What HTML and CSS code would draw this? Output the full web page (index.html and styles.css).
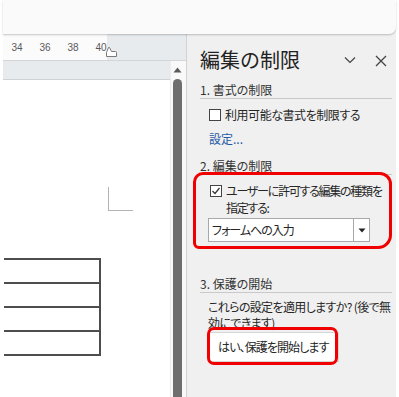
FILE: index.html
```html
<!DOCTYPE html>
<html lang="ja">
<head>
<meta charset="utf-8">
<link rel="stylesheet" href="styles.css">
</head>
<body>
<div class="frame">
  <div class="ribbon"></div>
  <div class="work">
    <div class="doc">
      <div class="ruler">
        <div class="ruler-white">
          <span class="tick">34</span><span class="tick">36</span><span class="tick">38</span><span class="tick">40</span>
        </div>
        <svg class="indent" width="13" height="11" viewBox="0 0 13 11"><path d="M2.5 10.5 V6.5 L4.5 1.5 Q5 0.8 5.5 1.5 L7.5 5.5 H11.5 Q12.5 5.5 12.5 6.5 V10.5 Z" fill="#fff" stroke="#7a7a7a" stroke-width="1"/></svg>
      </div>
      <div class="docbody">
        <div class="pagecol">
          <div class="band"></div>
          <div class="page">
            <div class="corner"></div>
            <div class="tbl">
              <div class="tr"></div>
              <div class="tr"></div>
              <div class="tr"></div>
              <div class="tr"></div>
            </div>
          </div>
        </div>
        <div class="scroll">
          <svg class="up" width="9" height="6" viewBox="0 0 9 6"><path d="M0.5 5.5 L4.5 0.5 L8.5 5.5 Z" fill="#5a5a5a"/></svg>
          <div class="thumb"></div>
        </div>
      </div>
    </div>
    <div class="pane">
      <div class="pane-head">
        <div class="pane-title">編集の制限</div>
        <svg class="ic chev" width="12" height="12" viewBox="0 0 12 12"><polyline points="1,3.5 6,8.5 11,3.5" fill="none" stroke="#444" stroke-width="1.2"/></svg>
        <svg class="ic close" width="12" height="12" viewBox="0 0 12 12"><path d="M1 1 L11 11 M11 1 L1 11" stroke="#444" stroke-width="1.3"/></svg>
      </div>

      <div class="sec-h">1. 書式の制限</div>
      <div class="chk-row one">
        <span class="box"></span>
        <span class="lbl">利用可能な書式を制限する</span>
      </div>
      <div class="link">設定...</div>

      <div class="sec-h sec2">2. 編集の制限</div>
      <div class="chk-row two">
        <span class="box checked"><svg width="10" height="10" viewBox="0 0 10 10"><polyline points="1.5,5 4,7.5 8.5,2" fill="none" stroke="#333" stroke-width="1.2"/></svg></span>
        <span class="lbl">ユーザーに許可する編集の種類を<br>指定する:</span>
      </div>
      <div class="select">
        <span class="sel-text">フォームへの入力</span>
        <span class="sel-btn"><svg width="8" height="5" viewBox="0 0 8 5"><path d="M0.5 0.5 H7.5 L4 4.5 Z" fill="#222"/></svg></span>
      </div>

      <div class="sec-h sec3">3. 保護の開始</div>
      <p class="para"><span class="pl">これらの設定を適用しますか? (後で無</span><span class="pl">効にできます)</span></p>
      <div class="btn">はい、保護を開始します</div>

      <div class="mark mark1"></div>
      <div class="mark mark2"></div>
    </div>
  </div>
</div>
</body>
</html>
```

FILE: styles.css
```css
* { box-sizing: border-box; }
html, body { margin: 0; padding: 0; }
body {
  width: 399px;
  height: 397px;
  overflow: hidden;
  background: #ffffff;
  font-family: "Noto Sans CJK JP", "Noto Sans", sans-serif;
  font-feature-settings: "palt";
  color: #262626;
}
.frame {
  margin: 0 3px;
  height: 397px;
  display: flex;
  flex-direction: column;
  background: #f0f0f0;
}
.ribbon {
  height: 34px;
  flex: none;
  background: #fafafa;
  border-bottom-right-radius: 7px;
  box-shadow: 0 1px 2px rgba(0,0,0,0.22);
  position: relative;
  z-index: 1;
}
.work {
  flex: 1;
  display: flex;
  min-height: 0;
}
.doc {
  width: 183px;
  display: flex;
  flex-direction: column;
}
.ruler {
  position: relative;
  height: 27px;
  flex: none;
  background: #e8ebee;
  border-bottom: 1px solid #d3d6d9;
  display: flex;
}
.ruler-white {
  width: 104px;
  background: #fbfbfb;
  display: flex;
  align-items: center;
  padding-top: 1px;
}
.tick {
  width: 28px;
  flex: none;
  text-align: center;
  font-family: "Liberation Sans", Arial, sans-serif;
  font-size: 10px;
  color: #5a5a5a;
  line-height: 12px;
}
.indent {
  position: absolute;
  left: 101px;
  top: 12px;
}
.docbody {
  flex: 1;
  display: flex;
  min-height: 0;
}
.pagecol {
  flex: 1;
  display: flex;
  flex-direction: column;
}
.band {
  height: 19px;
  flex: none;
  background: #e8ebee;
  border-bottom: 1px solid #cfd2d5;
}
.page {
  flex: 1;
  background: #ffffff;
  padding-top: 107px;
  padding-left: 1px;
}
.corner {
  margin-left: 104px;
  width: 25px;
  height: 24px;
  border-left: 1px solid #b3b3b3;
  border-bottom: 1px solid #b3b3b3;
}
.tbl {
  margin-top: 47px;
  width: 97px;
  border-top: 2px solid #4d4d4d;
  border-right: 2px solid #4d4d4d;
}
.tr {
  height: 24px;
  border-bottom: 2px solid #4d4d4d;
}
.scroll {
  width: 16px;
  flex: none;
  background: #f9f9f9;
  border-left: 1px solid #ececec;
  display: flex;
  flex-direction: column;
  align-items: center;
  padding-top: 6px;
  padding-right: 2px;
}
.up { display: block; }
.thumb {
  margin-top: 6px;
  width: 9px;
  flex: 1;
  background: #6e6e6e;
  border-radius: 4.5px 4.5px 0 0;
}
.pane {
  position: relative;
  width: 210px;
  border-left: 1px solid #d2d2d2;
  background: #f0f0f0;
  padding: 0 4px 0 13px;
  white-space: nowrap;
}
.pane-head {
  margin-top: 13px;
  height: 26px;
  display: flex;
  align-items: center;
  padding-right: 5px;
}
.pane-title {
  flex: 1;
  font-size: 20px;
  line-height: 26px;
  color: #222;
  font-feature-settings: normal;
}
.ic { display: block; flex: none; }
.close { margin-left: 19px; margin-top: 1px; }
.sec-h {
  margin-top: 9px;
  font-size: 12px;
  line-height: 16px;
  color: #333;
  border-bottom: 1px solid #c9c9c9;
}
.sec2 { margin-top: 11px; }
.sec3 { margin-top: 34px; }
.chk-row {
  margin-top: 8px;
  padding-left: 9px;
  display: flex;
  align-items: flex-start;
  gap: 4px;
  font-size: 12px;
  line-height: 16px;
}
.chk-row .box { margin-top: 2px; }
.chk-row.one .lbl { letter-spacing: -0.45px; }
.chk-row.two {
  margin-top: 7px;
  padding-left: 10px;
  line-height: 17px;
}
.chk-row.two .lbl { letter-spacing: -1.25px; }
.chk-row.two .box { margin-top: 3px; }
.box {
  width: 12px;
  height: 12px;
  flex: none;
  border: 1px solid #444;
  background: #fff;
  display: flex;
  align-items: center;
  justify-content: center;
}
.box svg { display: block; }
.link {
  margin-top: 8px;
  padding-left: 9px;
  font-size: 12px;
  line-height: 16px;
  color: #1f5aa6;
}
.select {
  margin-top: 2px;
  margin-left: 8px;
  width: 162px;
  height: 24px;
  background: #fff;
  border: 1px solid #a8a8a8;
  display: flex;
  align-items: center;
}
.sel-text {
  flex: 1;
  padding-left: 3px;
  font-size: 12px;
  line-height: 16px;
  letter-spacing: -1px;
}
.sel-btn {
  width: 16px;
  height: 100%;
  border-left: 1px solid #a8a8a8;
  display: flex;
  align-items: center;
  justify-content: center;
}
.sel-btn svg { display: block; }
.para {
  margin: 6px 0 0 0;
  padding-left: 8px;
  font-size: 12px;
  letter-spacing: -0.65px;
}
.pl {
  display: block;
  height: 15px;
  line-height: 15px;
}
.pl + .pl { margin-top: 1px; }
.btn {
  margin-top: 2px;
  margin-left: 8px;
  width: 131px;
  height: 30px;
  background: #ffffff;
  border: 1px solid #d6d6d6;
  padding-left: 9px;
  font-size: 12px;
  line-height: 28px;
  letter-spacing: -0.9px;
}
.mark {
  position: absolute;
  border: 3px solid #f00000;
  pointer-events: none;
}
.mark1 {
  left: 6px;
  top: 138px;
  width: 199px;
  height: 77px;
  border-radius: 10px 12px 14px 6px;
}
.mark2 {
  left: 20px;
  top: 293px;
  width: 131px;
  height: 38px;
  border-radius: 7px;
}
```
